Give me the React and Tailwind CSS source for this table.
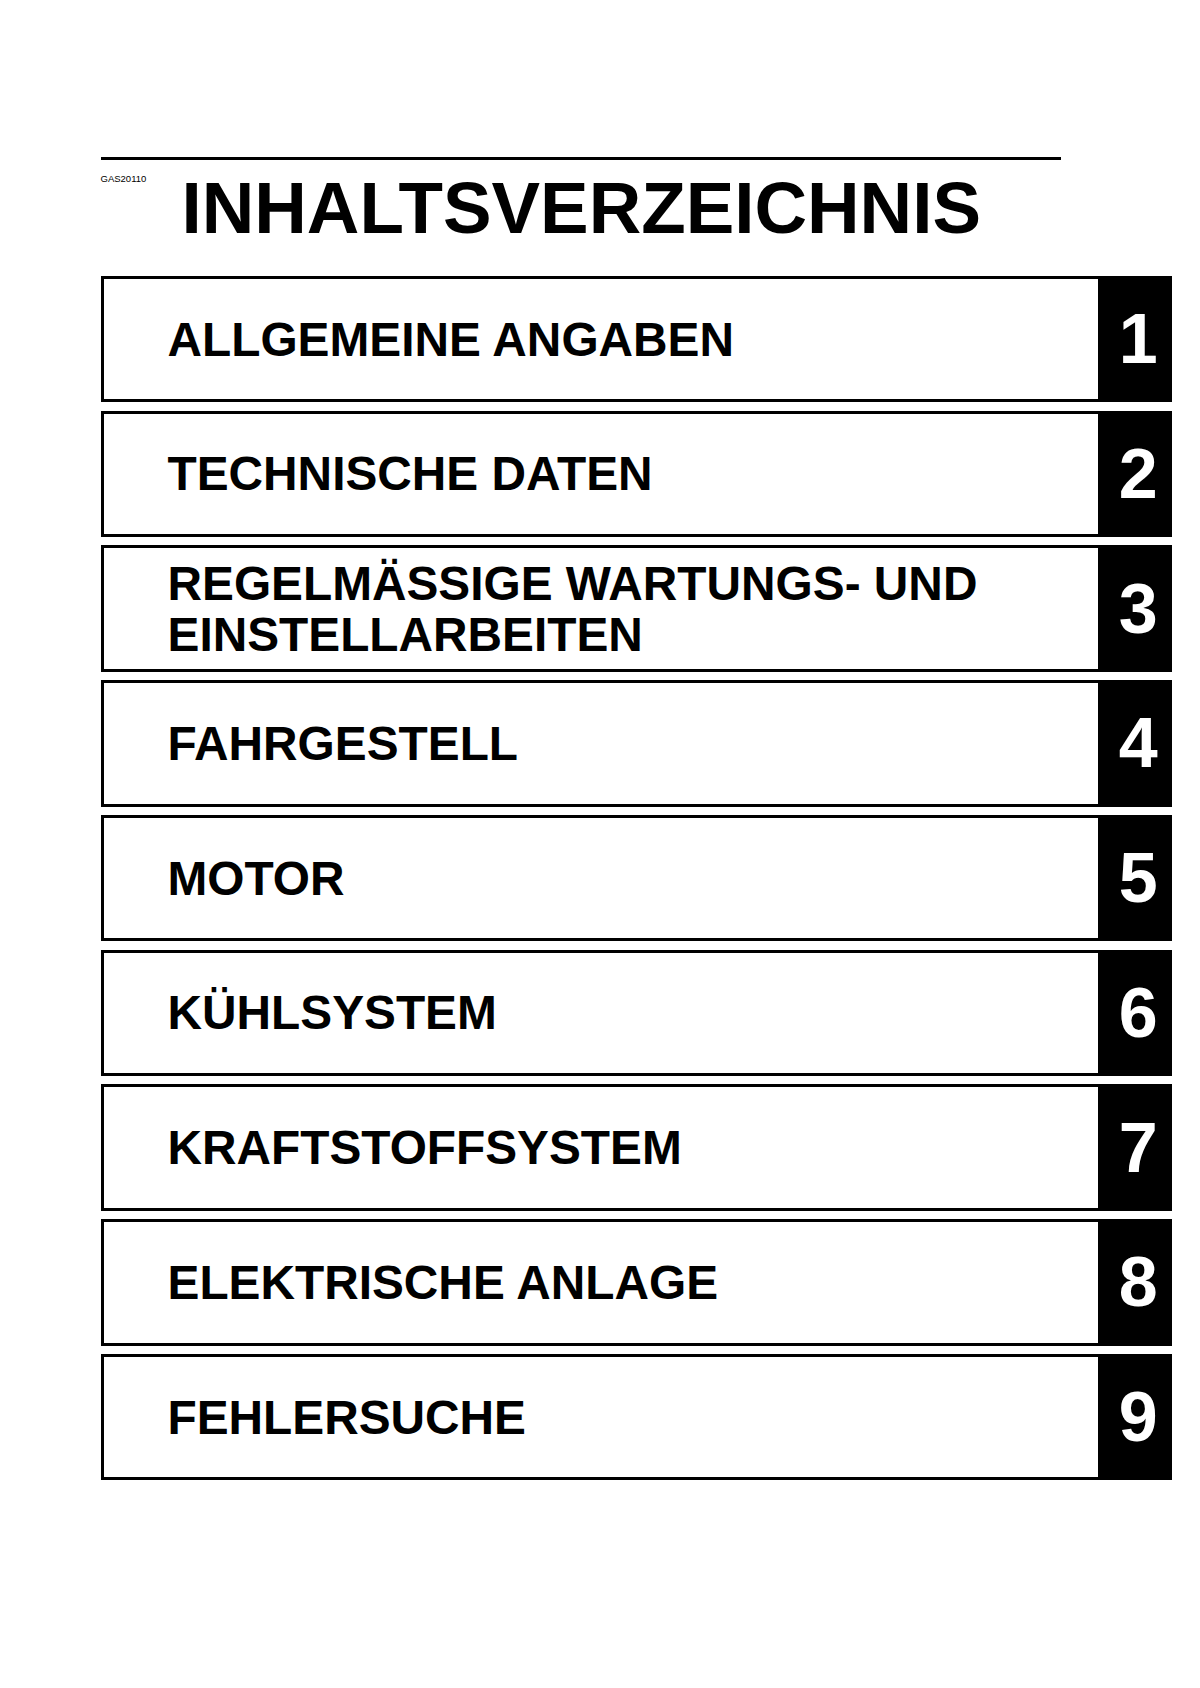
import React from "react";

const chapters = [
  { nr: "1", title: ["ALLGEMEINE ANGABEN"] },
  { nr: "2", title: ["TECHNISCHE DATEN"] },
  { nr: "3", title: ["REGELMÄSSIGE WARTUNGS- UND", "EINSTELLARBEITEN"] },
  { nr: "4", title: ["FAHRGESTELL"] },
  { nr: "5", title: ["MOTOR"] },
  { nr: "6", title: ["KÜHLSYSTEM"] },
  { nr: "7", title: ["KRAFTSTOFFSYSTEM"] },
  { nr: "8", title: ["ELEKTRISCHE ANLAGE"] },
  { nr: "9", title: ["FEHLERSUCHE"] },
];

function ChapterRow({ nr, title }) {
  return (
    <div className="flex h-[126.5px]">
      <div className="flex flex-1 flex-col justify-center border-[3px] border-r-0 border-black pl-[64px]">
        {title.map((line) => (
          <div key={line} className="text-[47.8px] font-bold leading-[51px] text-black">
            {line}
          </div>
        ))}
      </div>
      <div className="flex w-[73.5px] items-center justify-center bg-black pl-[7px]">
        <span className="text-[70px] font-bold leading-none text-white">{nr}</span>
      </div>
    </div>
  );
}

export default function App() {
  return (
    <div className="min-h-[1688px] bg-white pl-[100.5px] pt-[157px] font-['Liberation_Sans',Arial,sans-serif]">
      <div className="h-[3px] w-[960px] bg-black" />

      <div className="mt-[12px] flex">
        <div className="mt-[2px] w-[81px] text-[9.5px] leading-none text-black">GAS20110</div>
        <h1 className="text-[72.8px] font-bold leading-none text-black">INHALTSVERZEICHNIS</h1>
      </div>

      <div className="mt-[31px] flex w-[1071px] flex-col gap-[8.25px]">
        {chapters.map((c) => (
          <ChapterRow key={c.nr} nr={c.nr} title={c.title} />
        ))}
      </div>
    </div>
  );
}
